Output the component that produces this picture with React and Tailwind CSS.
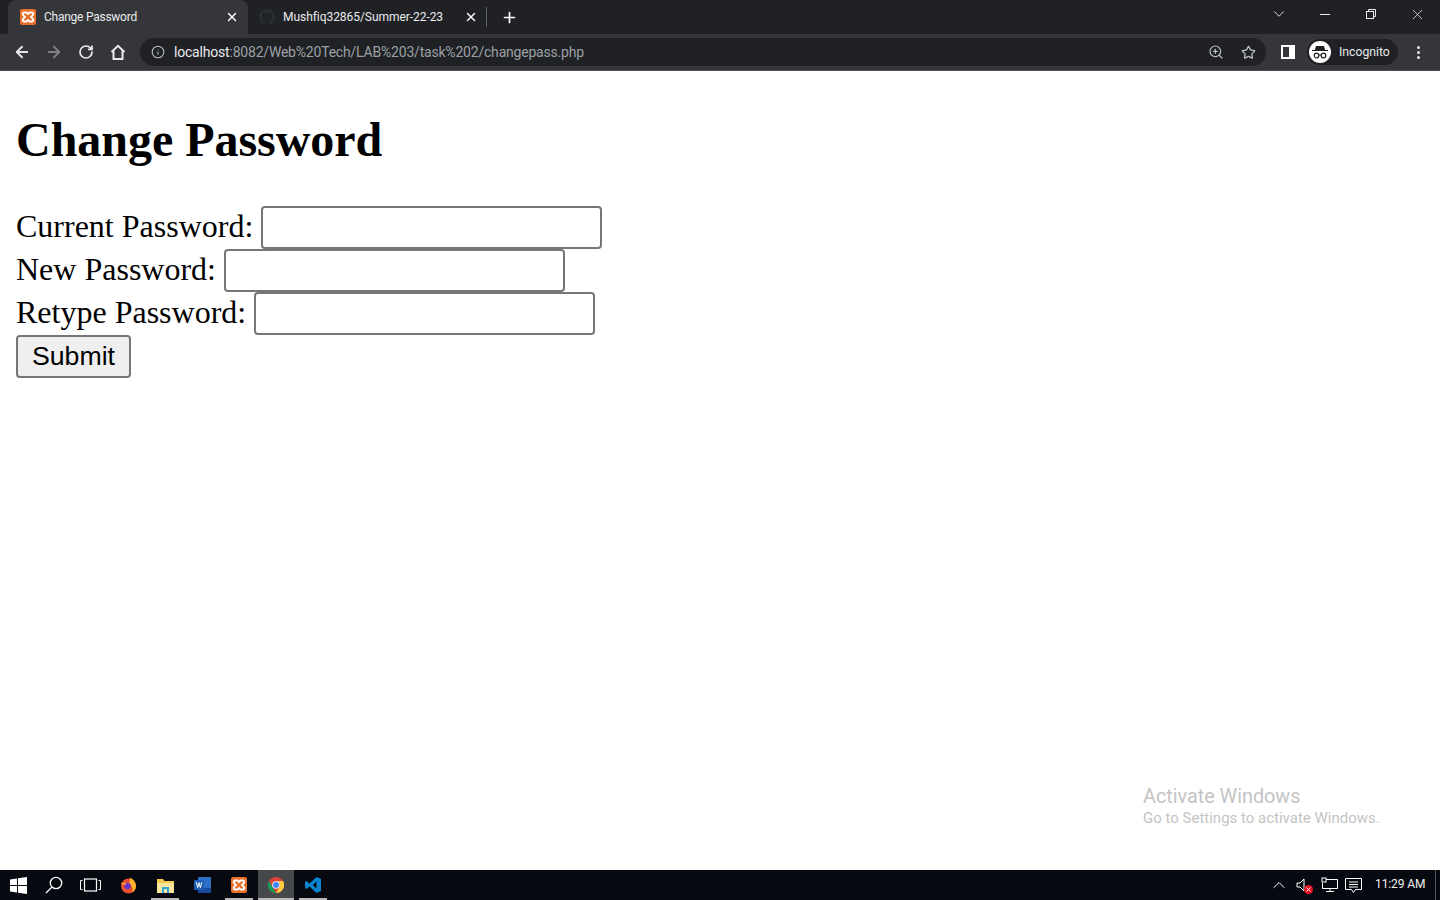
import React from "react";
import { ArrowLeft, ArrowRight, RotateCw, Info, ZoomIn, Star, X, Plus, ChevronDown, ChevronUp } from "lucide-react";

const ui = "font-['Roboto','Noto_Sans',sans-serif]";

function Xampp({ size = 16 }) {
  return (
    <svg width={size} height={size} viewBox="0 0 16 16" className="shrink-0">
      <rect width="16" height="16" rx="2" fill="#e8702a" />
      <path d="M4 3.500h2.500L8 5l1.500-1.500H12a1.500 1.500 0 0 1 1 2.500L11 8l2 2a1.500 1.500 0 0 1-1 2.500H9.500L8 11l-1.500 1.500H4a1.500 1.500 0 0 1-1-2.500l2-2-2-2a1.500 1.500 0 0 1 1-2.500z" fill="none" stroke="#fff" strokeWidth="1.800" />
    </svg>
  );
}

function Github() {
  return (
    <svg width="16" height="16" viewBox="0 0 16 16" className="shrink-0" fill="#2a2e33">
      <path d="M8 0C3.580 0 0 3.580 0 8c0 3.540 2.290 6.530 5.470 7.590.4.070.55-.17.55-.38v-1.340c-2.230.49-2.690-1.070-2.690-1.070-.36-.930-.89-1.170-.89-1.170-.73-.5.050-.49.050-.49.8.060 1.230.82 1.230.82.71 1.220 1.870.87 2.330.66.070-.52.280-.87.500-1.070-1.780-.2-3.640-.89-3.640-3.950 0-.870.31-1.590.82-2.150-.08-.2-.36-1.020.08-2.120 0 0 .67-.21 2.200.82a7.600 7.600 0 0 1 4 0c1.530-1.040 2.200-.82 2.200-.82.44 1.100.16 1.920.08 2.120.51.560.82 1.270.82 2.150 0 3.070-1.870 3.750-3.650 3.950.29.250.54.730.54 1.480v2.200c0 .210.15.460.55.380A8 8 0 0 0 16 8c0-4.420-3.580-8-8-8z" />
    </svg>
  );
}

function Tabs() {
  return (
    <div className="h-[34px] bg-[#202124] flex items-end relative">
      <div className="w-[8px]" />
      <div className="w-[240px] h-[34px] bg-[#35363a] rounded-t-[8px] flex items-center pl-[12px] pr-[9px] text-[#e8eaed]">
        <Xampp />
        <span className="ml-[8px] text-[12px] tracking-[-0.25px] flex-1">Change Password</span>
        <X size={14} strokeWidth={2.4} className="text-white" />
      </div>
      <div className="w-[238px] h-[34px] flex items-center pl-[11px] pr-[8px] text-[#e8eaed]">
        <Github />
        <span className="ml-[8px] text-[12px] tracking-[-0.05px] flex-1">Mushfiq32865/Summer-22-23</span>
        <X size={14} strokeWidth={2.4} className="text-white" />
      </div>
      <div className="w-px h-[20px] bg-[#5f6368] mb-[7px]" />
      <div className="w-[44px] h-[34px] flex items-center justify-center">
        <Plus size={17} strokeWidth={2.4} className="text-white" />
      </div>
      <div className="flex-1" />
      <div className="flex items-center h-[28px] self-start text-[#e8eaed]">
        <ChevronDown size={18} strokeWidth={1.2} className="mr-[32px]" />
        <div className="w-[10px] h-px bg-[#e8eaed] mr-[35px]" />
        <svg width="12" height="12" viewBox="0 0 12 12" fill="none" stroke="currentColor" className="mr-[32px]">
          <rect x="1.500" y="3.500" width="7" height="7" />
          <path d="M3.500 3.500v-2h7v7h-2" />
        </svg>
        <X size={17} strokeWidth={1.100} className="mr-[14px]" />
      </div>
    </div>
  );
}

function HomeIcon() {
  return (
    <svg width="16" height="16" viewBox="0 0 16 16" fill="none" stroke="#e8eaed" strokeWidth="2" className="ml-[16px]">
      <path d="M1.500 8L8 1.800 14.500 8M3.500 7v8h9V7" />
    </svg>
  );
}

function Toolbar() {
  return (
    <div className="h-[37px] bg-[#35363a] flex items-center border-b border-[#4a4c50]">
      <ArrowLeft size={18} strokeWidth={2.4} className="ml-[13px] text-[#e8eaed]" />
      <ArrowRight size={18} strokeWidth={2.4} className="ml-[14px] text-[#7f8184]" />
      <RotateCw size={16} strokeWidth={2.6} className="ml-[15px] text-[#e8eaed]" />
      <HomeIcon />
      <div className="ml-[14px] w-[1126px] h-[28px] rounded-full bg-[#202124] flex items-center pl-[11px] pr-[10px]">
        <Info size={14} strokeWidth={1.800} className="text-[#bdc1c6]" />
        <span className="ml-[9px] text-[14px] tracking-[-0.2px] text-[#e8eaed]">localhost</span>
        <span className="text-[14px] tracking-[-0.2px] text-[#9aa0a6]">:8082/Web%20Tech/LAB%203/task%202/changepass.php</span>
        <div className="flex-1" />
        <ZoomIn size={16} strokeWidth={1.800} className="text-[#bdc1c6]" />
        <Star size={15} strokeWidth={2} className="ml-[17px] text-[#bdc1c6]" />
      </div>
      <div className="ml-[15px] w-[14px] h-[14px] bg-white flex justify-start">
        <div className="w-[6px] h-[10px] mt-[2px] ml-[2px] bg-[#35363a]" />
      </div>
      <div className="ml-[12px] w-[91px] h-[26px] rounded-full bg-[#202124] flex items-center pl-[2px]">
        <div className="w-[22px] h-[22px] rounded-full bg-white flex items-center justify-center">
          <svg width="16" height="14" viewBox="0 0 16 14" fill="#202124">
            <path d="M4 1h8l1.200 4H16v1H0V5h2.800z" />
            <circle cx="4.500" cy="10.500" r="2.300" fill="none" stroke="#202124" strokeWidth="1.200" />
            <circle cx="11.500" cy="10.500" r="2.300" fill="none" stroke="#202124" strokeWidth="1.200" />
            <path d="M6.800 10h2.400" stroke="#202124" />
          </svg>
        </div>
        <span className="ml-[8px] text-[12.200px] text-[#e8eaed]">Incognito</span>
      </div>
      <div className="ml-[19px] flex flex-col gap-[2px]">
        <div className="w-[3px] h-[3px] rounded-full bg-[#e8eaed]" />
        <div className="w-[3px] h-[3px] rounded-full bg-[#e8eaed]" />
        <div className="w-[3px] h-[3px] rounded-full bg-[#e8eaed]" />
      </div>
    </div>
  );
}

function Field({ label }) {
  return (
    <div className="flex items-center h-[43px]">
      <label className="text-[32px] leading-none text-black pb-[4px]">{label}</label>
      <div className="ml-[8px] w-[341px] h-[43px] border-2 border-[#767676] rounded-[4px] bg-white" />
    </div>
  );
}

function Page() {
  return (
    <div className="flex-1 bg-white relative font-['Liberation_Serif',serif] pl-[16px] pt-[42px]">
      <h1 className="text-[48px] leading-[54px] font-bold tracking-[-0.03px] text-black">Change Password</h1>
      <div className="mt-[39px]">
        <Field label="Current Password:" />
        <Field label="New Password:" />
        <Field label="Retype Password:" />
        <button className="block w-[115px] h-[43px] border-2 border-[#767676] rounded-[4px] bg-[#efefef] text-[26.700px] leading-none text-black font-['Liberation_Sans',sans-serif]">Submit</button>
      </div>
      <div className={`absolute left-[1143px] top-[712px] text-[#c4c4c4] ${ui}`}>
        <div className="text-[19.800px] leading-[27px]">Activate Windows</div>
        <div className="text-[15px] leading-[16px]">Go to Settings to activate Windows.</div>
      </div>
    </div>
  );
}

function TaskIcon({ children, active, bar }) {
  return (
    <div className={`w-[37px] h-[30px] pr-px flex items-center justify-center relative ${active ? "bg-[linear-gradient(to_right,#47484b_36px,transparent_36px)]" : ""}`}>
      {children}
      {bar && <div className={`absolute bottom-0 h-[2px] bg-[#b9b9b9] ${active ? "left-0 right-px" : "left-[4px] right-[5px]"}`} />}
    </div>
  );
}

function Taskbar() {
  return (
    <div className="h-[30px] bg-[#06090f] flex items-center text-white">
      <div className="w-[36px] flex justify-center">
        <svg width="17" height="17" viewBox="0 0 17 17" fill="#fff"><path d="M0 2.500l7-1v6.500H0zM8 1.300l9-1.300v8H8zM0 9h7v6.500l-7-1zM8 9h9v8l-9-1.300z" /></svg>
      </div>
      <div className="w-[36px] flex justify-center">
        <svg width="18" height="18" viewBox="0 0 18 18" fill="none" stroke="#fff" strokeWidth="1.300"><circle cx="11" cy="7" r="5.700" /><path d="M7 11l-6 6" /></svg>
      </div>
      <div className="w-[36px] flex justify-center">
        <svg width="21" height="14" viewBox="0 0 21 14" fill="none" stroke="#fff"><rect x="4.500" y="1" width="12" height="12" strokeWidth="1.200" /><path d="M2.500 2.500H.5v9h2M18.500 2.500h2v9h-2" /></svg>
      </div>
      <div className="w-[2px]" />
      <TaskIcon>
        <svg width="17" height="17" viewBox="0 0 17 17"><circle cx="8.500" cy="9" r="7.500" fill="#e8502f" /><path d="M10 .5c3 1.500 6 4.500 6 8.500 0 3-1.500 5-4 6.500 1.500-3.500 0-8-4-8.500 1-1 2.500-3 2-6.500z" fill="#fdb32a" /><circle cx="7.500" cy="9" r="3.200" fill="#6a35c9" /><path d="M1.500 6c1 1 3 1 4.500.5" stroke="#fdb32a" strokeWidth="1.500" fill="none" /></svg>
      </TaskIcon>
      <TaskIcon bar>
        <svg width="17" height="15" viewBox="0 0 17 15"><path d="M0 1h6l1.500 2H17v11H0z" fill="#f2c94c" /><rect x="0" y="5" width="17" height="10" fill="#fbe59a" /><path d="M5 9h7v6h-2v-4H7v4H5z" fill="#29a8e0" /></svg>
      </TaskIcon>
      <TaskIcon>
        <svg width="17" height="16" viewBox="0 0 17 16"><rect x="4" y="0" width="13" height="16" rx="1" fill="#2b6fc8" /><rect x="4" y="11" width="13" height="5" fill="#1a4a9c" /><rect y="3" width="10" height="10" rx="1" fill="#1d5bb5" /><path d="M1.800 5.300h1.200l.8 3.900.9-3.900h.8l.9 3.900.8-3.900h1.100l-1.400 5.500h-1l-.8-3.200-.8 3.200h-1z" fill="#fff" /></svg>
      </TaskIcon>
      <TaskIcon bar><Xampp /></TaskIcon>
      <TaskIcon active bar>
        <svg width="16" height="16" viewBox="0 0 16 16"><circle cx="8" cy="8" r="8" fill="#db4437" /><path d="M8 16A8 8 0 0 1 1 4l3.500 6 3.500 6z" fill="#0f9d58" /><path d="M8 4h7a8 8 0 0 1-7 12l3.500-6A4 4 0 0 0 8 4z" fill="#ffcd40" /><circle cx="8" cy="8" r="3.800" fill="#fff" /><circle cx="8" cy="8" r="3" fill="#4285f4" /></svg>
      </TaskIcon>
      <TaskIcon bar>
        <svg width="16" height="16" viewBox="0 0 16 16"><path d="M11.500 0L16 2v12l-4.500 2L4.500 9.500 1.500 12 0 11V5l1.500-1 3 2.500zM11.500 4.500L7.800 8l3.700 3.500z" fill="#0a84d0" fillRule="evenodd" /></svg>
      </TaskIcon>
      <div className="flex-1" />
      <ChevronUp size={20} strokeWidth={1.200} className="mr-[7px]" />
      <div className="relative mr-[8px] w-[17px] h-[18px] flex items-center">
        <svg width="11" height="14" viewBox="0 0 11 14" fill="none" stroke="#fff"><path d="M1 5h3l4-4v12L4 9H1z" /></svg>
        <div className="absolute right-0 bottom-0 w-[9px] h-[9px] rounded-full bg-[#e81123] flex items-center justify-center">
          <X size={7} strokeWidth={3} />
        </div>
      </div>
      <svg width="17" height="16" viewBox="0 0 17 16" fill="none" stroke="#fff" className="mr-[7px]"><path d="M5 2.500h11.500v9H1.500V6M9 11.500v3M5 14.500h8" /><rect x="1" y="1" width="4" height="4" /></svg>
      <svg width="17" height="17" viewBox="0 0 17 17" fill="none" stroke="#fff" className="mr-[13px]"><path d="M.5 1.500h16v11h-6l-2 3-2-3h-6z" /><path d="M4 5h9M4 7.500h9M4 10h9" /></svg>
      <span className={`text-[12px] tracking-[-0.1px] leading-none whitespace-nowrap w-[50px] mr-[10px] -mt-[3px] text-[#f0f0f0] ${ui}`}>11:29 AM</span>
      <div className="w-px h-[30px] bg-[#555]" />
      <div className="w-[4px]" />
    </div>
  );
}

export default function App() {
  return (
    <div className={`w-[1440px] h-[900px] flex flex-col overflow-hidden ${ui}`}>
      <Tabs />
      <Toolbar />
      <Page />
      <Taskbar />
    </div>
  );
}
